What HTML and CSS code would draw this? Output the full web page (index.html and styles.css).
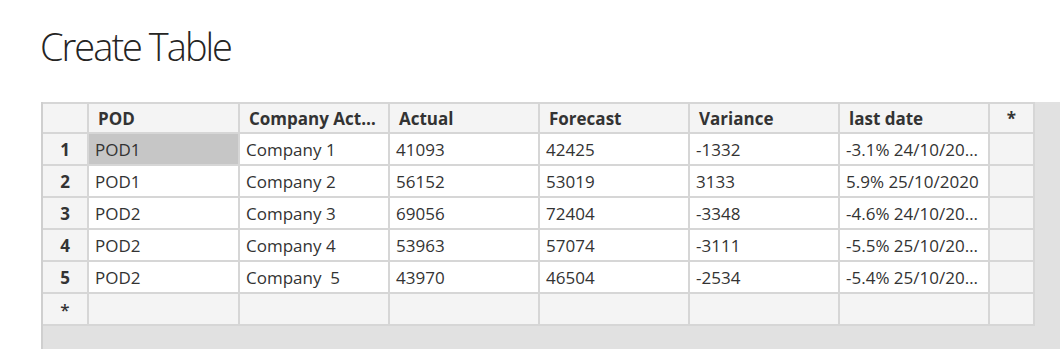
FILE: index.html
```html
<!DOCTYPE html>
<html>
<head>
<meta charset="utf-8">
<link rel="stylesheet" href="styles.css">
</head>
<body>
<h1 class="title">Create Table</h1>
<div class="panel">
  <div class="grid">
    <div class="hd corner"></div>
    <div class="hd">POD</div>
    <div class="hd">Company Act…</div>
    <div class="hd">Actual</div>
    <div class="hd">Forecast</div>
    <div class="hd">Variance</div>
    <div class="hd">last date</div>
    <div class="hd star">*</div>

    <div class="num">1</div>
    <div class="cell selected">POD1</div>
    <div class="cell">Company 1</div>
    <div class="cell">41093</div>
    <div class="cell">42425</div>
    <div class="cell">-1332</div>
    <div class="cell">-3.1% 24/10/20…</div>
    <div class="blank"></div>

    <div class="num">2</div>
    <div class="cell">POD1</div>
    <div class="cell">Company 2</div>
    <div class="cell">56152</div>
    <div class="cell">53019</div>
    <div class="cell">3133</div>
    <div class="cell">5.9% 25/10/2020</div>
    <div class="blank"></div>

    <div class="num">3</div>
    <div class="cell">POD2</div>
    <div class="cell">Company 3</div>
    <div class="cell">69056</div>
    <div class="cell">72404</div>
    <div class="cell">-3348</div>
    <div class="cell">-4.6% 24/10/20…</div>
    <div class="blank"></div>

    <div class="num">4</div>
    <div class="cell">POD2</div>
    <div class="cell">Company 4</div>
    <div class="cell">53963</div>
    <div class="cell">57074</div>
    <div class="cell">-3111</div>
    <div class="cell">-5.5% 25/10/20…</div>
    <div class="blank"></div>

    <div class="num">5</div>
    <div class="cell">POD2</div>
    <div class="cell">Company&nbsp; 5</div>
    <div class="cell">43970</div>
    <div class="cell">46504</div>
    <div class="cell">-2534</div>
    <div class="cell">-5.4% 25/10/20…</div>
    <div class="blank"></div>

    <div class="num newrow">*</div>
    <div class="blank"></div>
    <div class="blank"></div>
    <div class="blank"></div>
    <div class="blank"></div>
    <div class="blank"></div>
    <div class="blank"></div>
    <div class="blank"></div>
  </div>
</div>
</body>
</html>
```

FILE: styles.css
```css
html, body {
  margin: 0;
  padding: 0;
  background: #ffffff;
  overflow: hidden;
}
body {
  font-family: "Open Sans", "Noto Sans", "Liberation Sans", sans-serif;
  color: #333333;
}
.title {
  margin: 0 0 29px 0;
  padding: 20px 0 0 40px;
  font-size: 38px;
  line-height: 53px;
  font-weight: 300;
  letter-spacing: -2px;
  color: #252423;
}
.panel {
  margin-left: 41px;
  height: 247px;
  background: #e1e1e1;
  border-left: 2px solid #cfcfcf;
}
.grid {
  display: inline-grid;
  grid-template-columns: 44px 149px 148px 148px 148px 148px 148px 43px;
  grid-template-rows: 28px repeat(6, 30px);
  gap: 2px;
  padding: 2px 2px 2px 0;
  background: #d6d6d6;
  font-size: 17px;
}
.grid > div {
  display: flex;
  align-items: center;
  white-space: nowrap;
  overflow: hidden;
}
.hd {
  background: #f4f4f4;
  font-weight: 700;
  padding-left: 9px;
  color: #333333;
}
.corner, .star {
  padding-left: 0;
}
.star {
  justify-content: center;
}
.num {
  background: #f4f4f4;
  font-weight: 700;
  justify-content: center;
}
.newrow {
  font-weight: 600;
}
.cell {
  background: #ffffff;
  padding-left: 6px;
}
.cell.selected {
  background: #c6c6c6;
}
.blank {
  background: #f4f4f4;
}
```
